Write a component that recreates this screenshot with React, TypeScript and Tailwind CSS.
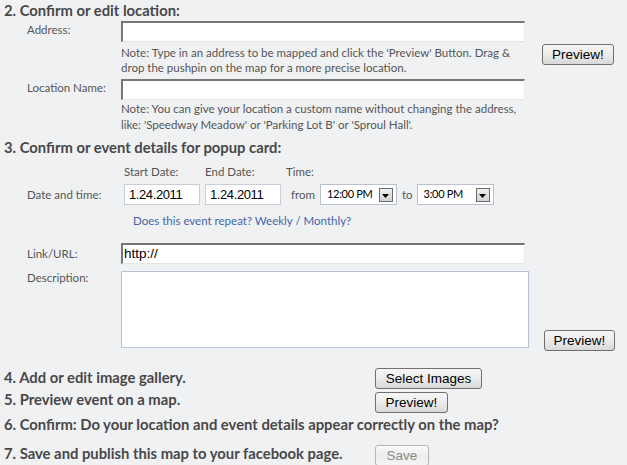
import React from 'react';

const font = "font-['Lato','DejaVu_Sans',sans-serif]";
const btnFont = "font-['Liberation_Sans',Arial,sans-serif]";

const Button: React.FC<{ label: string; className?: string; disabled?: boolean }> = ({ label, className = '', disabled }) => (
  <button
    className={`${btnFont} h-[21px] rounded-[3px] border text-[13.5px] leading-none bg-gradient-to-b from-[#f6f6f6] via-[#ececec] to-[#d8d8d8] ${
      disabled ? 'border-[#b5b5b5] text-[#8a8a8a] from-[#fbfbfb] to-[#f4f4f4]' : 'border-[#707070] text-black'
    } ${className}`}
  >
    {label}
  </button>
);

const TextInput: React.FC<{ value?: string; className?: string }> = ({ value = '', className = '' }) => (
  <div
    className={`h-[21px] bg-white border-t-2 border-l-2 border-[#767676] border-b border-r border-b-[#e4e4e4] border-r-[#ececec] flex items-center ${className}`}
  >
    <span className={`${btnFont} text-[13.5px] text-black pl-[1px]`}>{value}</span>
  </div>
);

const Select: React.FC<{ value: string; className?: string }> = ({ value, className = '' }) => (
  <div className={`h-[21px] bg-white border border-[#b9c1cd] flex items-center justify-between pl-[6px] pr-[3px] ${className}`}>
    <span className={`${font} text-[11px] tracking-[-0.3px] whitespace-nowrap text-black`}>{value}</span>
    <span className="w-[14px] h-[14px] border border-[#6b6b6b] bg-gradient-to-b from-[#f0f0f0] to-[#d2d2d2] flex items-center justify-center">
      <svg width="7" height="4" viewBox="0 0 7 4" className="mt-[2px]">
        <path d="M0 0h7L3.5 4z" fill="#000" />
      </svg>
    </span>
  </div>
);

const Heading: React.FC<{ children: React.ReactNode; className?: string }> = ({ children, className = '' }) => (
  <h2 className={`${font} font-bold text-[14.8px] leading-[20px] text-[#484848] pl-[4px] whitespace-nowrap ${className}`}>{children}</h2>
);

function TextInputPlain({ value, className = '' }: { value: string; className?: string }) {
  return (
    <div className={`w-[76px] h-[21px] bg-white border border-[#c9ced6] flex items-center pl-[4px] ${className}`}>
      <span className={`${btnFont} text-[13px] tracking-[-0.4px] text-black`}>{value}</span>
    </div>
  );
}

export default function App() {
  return (
    <div className={`${font} w-[627px] h-[465px] overflow-hidden bg-[#f0f1f3] text-[#555] text-[11.5px]`}>
      <Heading>2. Confirm or edit location:</Heading>

      {/* Address */}
      <div className="flex mt-[1px]">
        <div className="w-[121px] pl-[27px] leading-[16px] pt-[1px]">Address:</div>
        <div className="w-[404px]">
          <TextInput />
          <p className="leading-[15px] mt-[3px]">
            Note: Type in an address to be mapped and click the 'Preview' Button. Drag &amp; drop the pushpin on the map for a more precise location.
          </p>
        </div>
        <div className="pl-[17px] pt-[23px]">
          <Button label="Preview!" className="w-[72px]" />
        </div>
      </div>

      {/* Location name */}
      <div className="flex mt-[4px]">
        <div className="w-[121px] pl-[27px] leading-[16px] pt-[1px]">Location Name:</div>
        <div className="w-[404px]">
          <TextInput />
          <p className="leading-[16px] mt-[1px]">
            Note: You can give your location a custom name without changing the address, like: 'Speedway Meadow' or 'Parking Lot B' or 'Sproul Hall'.
          </p>
        </div>
      </div>

      <Heading className="mt-[4px]">3. Confirm or event details for popup card:</Heading>

      {/* Date and time */}
      <div className="flex mt-[8px]">
        <div className="w-[121px] pl-[27px] pt-[23px] leading-[14px]">Date and time:</div>
        <div className="pl-[3px]">
          <div className="flex leading-[14px]">
            <span className="w-[81px]">Start Date:</span>
            <span className="w-[81px]">End Date:</span>
            <span>Time:</span>
          </div>
          <div className="flex items-center mt-[5px]">
            <TextInputPlain value="1.24.2011" />
            <TextInputPlain value="1.24.2011" className="ml-[5px]" />
            <span className="ml-[10px] mr-[5px]">from</span>
            <Select value="12:00 PM" className="w-[77px]" />
            <span className="ml-[5px] mr-[4px]">to</span>
            <Select value="3:00 PM" className="w-[77px]" />
          </div>
        </div>
      </div>

      <div className="pl-[133px] mt-[9px] leading-[14px] text-[#4466a8]">Does this event repeat? Weekly / Monthly?</div>

      {/* Link */}
      <div className="flex mt-[15px]">
        <div className="w-[121px] pl-[27px] pt-[4px] leading-[14px]">Link/URL:</div>
        <TextInput value="http://" className="w-[404px]" />
      </div>

      {/* Description */}
      <div className="flex mt-[7px]">
        <div className="w-[121px] pl-[27px] leading-[14px]">Description:</div>
        <div className="w-[408px] h-[77px] bg-white border border-[#b7c2d3]" />
        <div className="pl-[15px] pt-[59px]">
          <Button label="Preview!" className="w-[71px]" />
        </div>
      </div>

      {/* Steps 4-7 */}
      <div className="flex mt-[16px] h-[22px]">
        <Heading className="w-[375px]">4. Add or edit image gallery.</Heading>
        <Button label="Select Images" className="w-[107px] mt-[1px]" />
      </div>
      <div className="flex h-[24px]">
        <Heading className="w-[375px]">5. Preview event on a map.</Heading>
        <Button label="Preview!" className="w-[73px] mt-[3px]" />
      </div>
      <div className="flex h-[24px] pt-[1px]">
        <Heading>6. Confirm: Do your location and event details appear correctly on the map?</Heading>
      </div>
      <div className="flex">
        <Heading className="w-[375px] pt-[6px]">7. Save and publish this map to your facebook page.</Heading>
        <Button label="Save" disabled className="w-[54px] mt-[8px]" />
      </div>
    </div>
  );
}
